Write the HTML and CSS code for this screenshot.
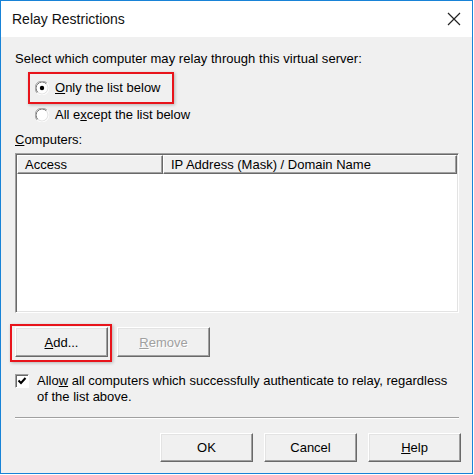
FILE: index.html
```html
<!DOCTYPE html>
<html lang="en">
<head>
  <meta charset="UTF-8">
  <title>Relay Restrictions</title>
  <link rel="stylesheet" href="styles.css">
</head>
<body>
  <div id="window">
    <div class="titlebar">
      <span class="title">Relay Restrictions</span>
      <svg class="close" width="14" height="14" viewBox="0 0 14 14">
        <path d="M1 1 L13 13 M13 1 L1 13" stroke="#222" stroke-width="1.2" fill="none"/>
      </svg>
    </div>

    <div class="client">
      <div class="prompt">Select which computer may relay through this virtual server:</div>

      <div class="radio-group">
        <label class="radio-row marked">
          <svg class="radio" width="14" height="14" viewBox="0 0 14 14">
            <path d="M2.05 11.95 A7 7 0 0 1 11.95 2.05" stroke="#a0a0a0" fill="none"/>
            <path d="M11.95 2.05 A7 7 0 0 1 2.05 11.95" stroke="#ffffff" fill="none"/>
            <path d="M2.76 11.24 A6 6 0 0 1 11.24 2.76" stroke="#696969" fill="none"/>
            <path d="M11.24 2.76 A6 6 0 0 1 2.76 11.24" stroke="#e3e3e3" fill="none"/>
            <circle cx="7" cy="7" r="5.4" fill="#ffffff"/>
            <circle cx="7" cy="7" r="2.2" fill="#000"/>
          </svg>
          <span><u>O</u>nly the list below</span>
        </label>
        <label class="radio-row">
          <svg class="radio" width="14" height="14" viewBox="0 0 14 14">
            <path d="M2.05 11.95 A7 7 0 0 1 11.95 2.05" stroke="#a0a0a0" fill="none"/>
            <path d="M11.95 2.05 A7 7 0 0 1 2.05 11.95" stroke="#ffffff" fill="none"/>
            <path d="M2.76 11.24 A6 6 0 0 1 11.24 2.76" stroke="#696969" fill="none"/>
            <path d="M11.24 2.76 A6 6 0 0 1 2.76 11.24" stroke="#e3e3e3" fill="none"/>
            <circle cx="7" cy="7" r="5.4" fill="#ffffff"/>
          </svg>
          <span>All e<u>x</u>cept the list below</span>
        </label>
      </div>

      <div class="label"><u>C</u>omputers:</div>

      <div class="listbox">
        <div class="list-header">
          <div class="col col-access">Access</div>
          <div class="col col-address">IP Address (Mask) / Domain Name</div>
        </div>
      </div>

      <div class="button-row">
        <span class="marked-button">
          <button class="btn" type="button"><u>A</u>dd...</button>
        </span>
        <button class="btn" type="button" disabled><u>R</u>emove</button>
      </div>

      <label class="check-row">
        <span class="checkbox">
          <svg width="10" height="10" viewBox="0 0 10 10">
            <path d="M1.5 4.5 L4 7 L8.5 2" stroke="#000" stroke-width="2" fill="none"/>
          </svg>
        </span>
        <span class="check-text">Allo<u>w</u> all computers which successfully authenticate to relay, regardless of the list above.</span>
      </label>

      <div class="separator"></div>

      <div class="dialog-buttons">
        <button class="btn btn-small" type="button">OK</button>
        <button class="btn btn-small" type="button">Cancel</button>
        <button class="btn btn-small" type="button"><u>H</u>elp</button>
      </div>
    </div>
  </div>
</body>
</html>
```

FILE: styles.css
```css
body {
  margin: 0;
  background-color: #ffffff;
  font-family: "Liberation Sans", Arial, sans-serif;
  font-size: 13px;
  color: #000;
}

#window {
  width: 473px;
  height: 474px;
  box-sizing: border-box;
  border: 1px solid #1883d7;
  display: flex;
  flex-direction: column;
}

.titlebar {
  height: 36px;
  background-color: #ffffff;
  display: flex;
  align-items: center;
  justify-content: space-between;
  padding: 0 11px 0 11px;
}

.title {
  font-size: 14px;
  color: #111;
}

.close {
  margin-top: -1px;
}

.client {
  flex: 1;
  background-color: #f0f0f0;
  padding: 14px 13px 0 14px;
  display: flex;
  flex-direction: column;
}

.prompt, .label {
  line-height: 16px;
}

.prompt {
  letter-spacing: 0.05px;
}

.radio-group {
  margin-top: 5px;
  margin-left: 13px;
  display: flex;
  flex-direction: column;
  align-items: flex-start;
}

.radio-row {
  display: flex;
  align-items: center;
  gap: 6px;
  height: 16px;
  line-height: 16px;
  padding-left: 7px;
}

.radio-row.marked {
  height: 28px;
  padding: 0 11px 0 5px;
  border: 2px solid #e8141b;
  box-shadow: 1px 1px 3px rgba(0, 0, 0, 0.25);
  margin-bottom: 3px;
}

.label {
  margin-top: 9px;
}

.listbox {
  margin-top: 5px;
  height: 160px;
  box-sizing: border-box;
  background-color: #ffffff;
  border: 1px solid;
  border-color: #a0a0a0 #ffffff #ffffff #a0a0a0;
  box-shadow: inset 1px 1px #696969, inset -1px -1px #e3e3e3;
  padding: 1px;
}

.list-header {
  display: flex;
  height: 19px;
}

.col {
  box-sizing: border-box;
  background-color: #f0f0f0;
  border: 1px solid;
  border-color: #ffffff #696969 #696969 #ffffff;
  box-shadow: inset -1px -1px #a0a0a0;
  padding-left: 7px;
  line-height: 17px;
}

.col-access {
  width: 146px;
}

.col-address {
  flex: 1;
}

.btn {
  font-family: "Liberation Sans", Arial, sans-serif;
  font-size: 13px;
  color: #000;
  background-color: #f0f0f0;
  width: 93px;
  height: 30px;
  padding: 0;
  border: 1px solid;
  border-color: #ffffff #696969 #696969 #ffffff;
  box-shadow: inset -1px -1px #a0a0a0, inset 1px 1px #e3e3e3;
}

.btn:disabled {
  color: #a0a0a0;
  text-shadow: 1px 1px #ffffff;
}

.button-row {
  margin-top: 14px;
  display: flex;
  gap: 9px;
}

.marked-button {
  position: relative;
  display: flex;
}

.marked-button::after {
  content: "";
  position: absolute;
  top: -3px;
  left: -5px;
  right: -4px;
  bottom: -5px;
  border: 2px solid #e8141b;
  box-shadow: 1px 1px 3px rgba(0, 0, 0, 0.25);
}

.check-row {
  margin-top: 16px;
  display: flex;
  gap: 8px;
  line-height: 16px;
}

.checkbox {
  flex: none;
  width: 14px;
  height: 14px;
  box-sizing: border-box;
  margin-top: 1px;
  background-color: #ffffff;
  border: 1px solid;
  border-color: #a0a0a0 #ffffff #ffffff #a0a0a0;
  box-shadow: inset 1px 1px #696969;
  display: flex;
  align-items: center;
  justify-content: center;
}

.separator {
  margin-top: 12px;
  height: 1px;
  border-top: 1px solid #a0a0a0;
  background-color: #ffffff;
}

.dialog-buttons {
  margin-top: 14px;
  display: flex;
  justify-content: flex-end;
  gap: 11px;
  margin-right: -2px;
}

.btn-small {
  height: 29px;
}
```
